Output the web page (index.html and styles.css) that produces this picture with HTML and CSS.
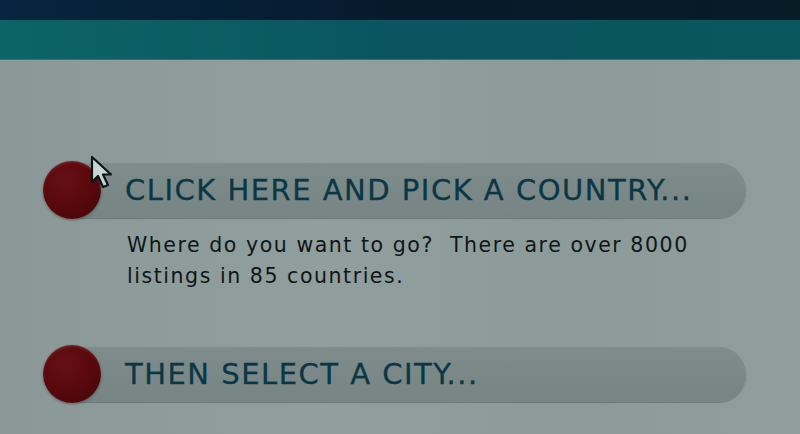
FILE: index.html
```html
<!DOCTYPE html>
<html>
<head>
<meta charset="utf-8">
<link rel="stylesheet" href="styles.css">
</head>
<body>
<div class="topbar"></div>
<div class="tealbar"></div>
<main class="content">
  <section class="step">
    <div class="step-row">
      <span class="dot"></span>
      <div class="pill">CLICK HERE AND PICK A COUNTRY...</div>
      <svg class="cursor" width="26" height="36" viewBox="0 0 26 36">
        <path d="M2 2 L2 27 L8 21 L13 32 L18 30 L13 19.5 L21 19.5 Z" fill="#c9d5d3" stroke="#0a1414" stroke-width="2.2" stroke-linejoin="round"/>
      </svg>
    </div>
    <p class="desc">Where do you want to go?&nbsp; There are over 8000<br>listings in 85 countries.</p>
  </section>
  <section class="step step-second">
    <div class="step-row">
      <span class="dot"></span>
      <div class="pill">THEN SELECT A CITY...</div>
    </div>
  </section>
</main>
</body>
</html>
```
FILE: styles.css
```css
* { box-sizing: border-box; }
html, body { margin: 0; padding: 0; }
body {
  width: 800px;
  height: 434px;
  overflow: hidden;
  background: linear-gradient(90deg, #8a9898 0%, #909e9d 40%, #8c9a9a 70%, #909d9d 100%);
  font-family: "DejaVu Sans", sans-serif;
}
.topbar {
  height: 20px;
  background: linear-gradient(90deg, #072440 0%, #061a2c 50%, #081c26 100%);
}
.tealbar {
  height: 40px;
  background: linear-gradient(90deg, #0c6468 0%, #0a5560 50%, #0a575f 100%);
  border-bottom: 1px solid #3d6e6e;
}
.content {
  padding-top: 101px;
}
.step {
  margin: 0 54px 0 43px;
}
.step-second {
  margin-top: 53px;
}
.step-row {
  position: relative;
  display: flex;
  align-items: center;
}
.dot {
  position: relative;
  z-index: 1;
  flex: none;
  width: 58px;
  height: 58px;
  border-radius: 50%;
  background: radial-gradient(circle at 38% 30%, #661015 0%, #5a090d 45%, #460508 100%);
  box-shadow: 0 1px 3px rgba(0,0,0,0.35), inset 0 2px 2px rgba(255,140,140,0.15);
}
.pill {
  flex: 1;
  margin-left: -46px;
  height: 55px;
  padding-left: 70px;
  display: flex;
  align-items: center;
  border-radius: 28px;
  background: linear-gradient(180deg, #7e8c8c 0%, #798787 60%, #768484 100%);
  box-shadow: 0 1px 1px rgba(40,60,60,0.35);
  color: #0b3745;
  font-family: "DejaVu Sans", sans-serif;
  font-size: 29px;
  letter-spacing: 1.5px;
  -webkit-text-stroke: 0.3px #0b3745;
  white-space: nowrap;
}
.cursor {
  position: absolute;
  left: 47px;
  top: -6px;
  z-index: 2;
}
.desc {
  margin: 11px 0 0 84px;
  font-size: 20.5px;
  line-height: 31px;
  color: #101616;
  letter-spacing: 1.55px;
}
```
